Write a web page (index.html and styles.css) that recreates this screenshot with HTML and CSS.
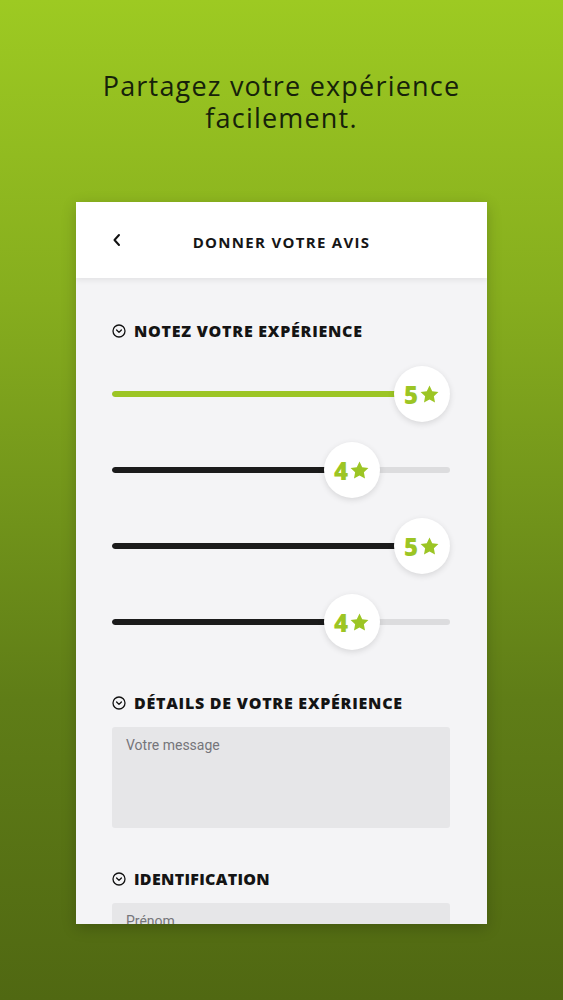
FILE: index.html
```html
<!DOCTYPE html>
<html>
<head>
    <title>Donner votre avis</title>
    <link rel="stylesheet" href="styles.css">
</head>
<body>
    <h1 class="tagline">Partagez votre expérience<br>facilement.</h1>

    <div class="phone">
        <header class="app-header">
            <span class="back-button">
                <svg width="10" height="14" viewBox="0 0 10 14"><path d="M7 2 L2.5 7 L7 12" fill="none" stroke="#111" stroke-width="2" stroke-linecap="round" stroke-linejoin="round"/></svg>
            </span>
            <h2>DONNER VOTRE AVIS</h2>
        </header>

        <div class="app-body">
            <div class="section-title">
                <svg class="toggle" width="14" height="14" viewBox="0 0 14 14"><circle cx="7" cy="7" r="6" fill="none" stroke="#111" stroke-width="1.3"/><path d="M4.6 6 L7 8.4 L9.4 6" fill="none" stroke="#111" stroke-width="1.3" stroke-linecap="round" stroke-linejoin="round"/></svg>
                NOTEZ VOTRE EXPÉRIENCE
            </div>

            <div class="rating">
                <div class="track"><div class="fill green" style="width: 310px"></div></div>
                <div class="knob" style="left: 282px">5<svg class="star" viewBox="0 0 24 24"><path d="M12 1.8 L15.1 8.3 L22.2 9.2 L17 14.1 L18.3 21.2 L12 17.7 L5.7 21.2 L7 14.1 L1.8 9.2 L8.9 8.3 Z"/></svg></div>
            </div>
            <div class="rating">
                <div class="track"><div class="fill" style="width: 240px"></div></div>
                <div class="knob" style="left: 212px">4<svg class="star" viewBox="0 0 24 24"><path d="M12 1.8 L15.1 8.3 L22.2 9.2 L17 14.1 L18.3 21.2 L12 17.7 L5.7 21.2 L7 14.1 L1.8 9.2 L8.9 8.3 Z"/></svg></div>
            </div>
            <div class="rating">
                <div class="track"><div class="fill" style="width: 310px"></div></div>
                <div class="knob" style="left: 282px">5<svg class="star" viewBox="0 0 24 24"><path d="M12 1.8 L15.1 8.3 L22.2 9.2 L17 14.1 L18.3 21.2 L12 17.7 L5.7 21.2 L7 14.1 L1.8 9.2 L8.9 8.3 Z"/></svg></div>
            </div>
            <div class="rating">
                <div class="track"><div class="fill" style="width: 240px"></div></div>
                <div class="knob" style="left: 212px">4<svg class="star" viewBox="0 0 24 24"><path d="M12 1.8 L15.1 8.3 L22.2 9.2 L17 14.1 L18.3 21.2 L12 17.7 L5.7 21.2 L7 14.1 L1.8 9.2 L8.9 8.3 Z"/></svg></div>
            </div>

            <div class="section-title details">
                <svg class="toggle" width="14" height="14" viewBox="0 0 14 14"><circle cx="7" cy="7" r="6" fill="none" stroke="#111" stroke-width="1.3"/><path d="M4.6 6 L7 8.4 L9.4 6" fill="none" stroke="#111" stroke-width="1.3" stroke-linecap="round" stroke-linejoin="round"/></svg>
                DÉTAILS DE VOTRE EXPÉRIENCE
            </div>
            <div class="field message">Votre message</div>

            <div class="section-title identification">
                <svg class="toggle" width="14" height="14" viewBox="0 0 14 14"><circle cx="7" cy="7" r="6" fill="none" stroke="#111" stroke-width="1.3"/><path d="M4.6 6 L7 8.4 L9.4 6" fill="none" stroke="#111" stroke-width="1.3" stroke-linecap="round" stroke-linejoin="round"/></svg>
                IDENTIFICATION
            </div>
            <div class="field">Prénom</div>
        </div>
    </div>
</body>
</html>
```

FILE: styles.css
```css
body {
    margin: 0;
    height: 1000px;
    overflow: hidden;
    font-family: 'Open Sans', 'DejaVu Sans', sans-serif;
    background: linear-gradient(to bottom, #9dca22 0%, #86ad1e 30%, #5f7d17 70%, #506812 100%);
    display: flex;
    flex-direction: column;
    align-items: center;
}

.tagline {
    margin: 70px 0 0;
    font-size: 27px;
    line-height: 32px;
    font-weight: 500;
    letter-spacing: 1.2px;
    text-align: center;
    color: #16220a;
}

.phone {
    margin-top: 68px;
    width: 411px;
    height: 722px;
    background-color: #f4f4f6;
    overflow: hidden;
    box-shadow: 0 4px 14px rgba(0, 0, 0, 0.2);
    display: flex;
    flex-direction: column;
}

.app-header {
    height: 76px;
    flex-shrink: 0;
    background-color: #fff;
    box-shadow: 0 2px 6px rgba(0, 0, 0, 0.08);
    display: flex;
    align-items: center;
    justify-content: center;
    position: relative;
}

.app-header h2 {
    margin: 0;
    font-size: 15px;
    font-weight: 700;
    letter-spacing: 1.3px;
    color: #161616;
    padding-top: 4px;
}

.back-button {
    position: absolute;
    left: 36px;
    top: 31px;
    display: flex;
}

.app-body {
    padding: 43px 37px 0 36px;
    display: flex;
    flex-direction: column;
}

.section-title {
    height: 20px;
    display: flex;
    align-items: center;
    gap: 8px;
    font-size: 16px;
    font-weight: 800;
    letter-spacing: 0.75px;
    color: #141414;
    margin-bottom: 15px;
}

.section-title .toggle {
    flex-shrink: 0;
}

.section-title.details {
    margin-top: 33px;
    margin-bottom: 14px;
}

.section-title.identification {
    margin-top: 41px;
    margin-bottom: 14px;
    letter-spacing: 0.3px;
}

.rating {
    height: 76px;
    position: relative;
    display: flex;
    align-items: center;
}

.track {
    width: 100%;
    height: 6px;
    border-radius: 3px;
    background-color: #dcdcde;
    overflow: hidden;
}

.fill {
    height: 100%;
    background-color: #1b1b1b;
    border-radius: 3px;
}

.fill.green {
    background-color: #9cc524;
}

.knob {
    position: absolute;
    top: 10px;
    width: 56px;
    height: 56px;
    border-radius: 50%;
    background-color: #fff;
    box-shadow: 0 2px 6px rgba(0, 0, 0, 0.12);
    display: flex;
    align-items: center;
    justify-content: center;
    gap: 1px;
    font-size: 24px;
    font-weight: 800;
    color: #9cc524;
}

.star {
    width: 21px;
    height: 21px;
    fill: #9cc524;
}

.field {
    background-color: #e6e6e8;
    border-radius: 3px;
    padding: 10px 14px;
    font-family: Roboto, sans-serif;
    font-size: 14px;
    color: #75757a;
    height: 40px;
    box-sizing: border-box;
}

.field.message {
    height: 101px;
}
```
